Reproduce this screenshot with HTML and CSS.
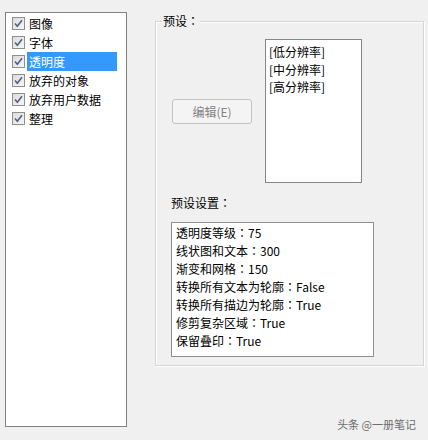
FILE: index.html
```html
<!DOCTYPE html>
<html lang="zh-CN">
<head>
<meta charset="utf-8">
<title>透明度</title>
<link rel="stylesheet" href="styles.css">
</head>
<body>
<div class="page">
  <div class="cats">
    <div class="cat"><span class="cb"><svg viewBox="0 0 13 13" width="13" height="13"><path d="M3 6.5 L5.3 9.2 L10 3.2" fill="none" stroke="#4d6185" stroke-width="1.6"/></svg></span><span class="lbl">图像</span></div>
    <div class="cat"><span class="cb"><svg viewBox="0 0 13 13" width="13" height="13"><path d="M3 6.5 L5.3 9.2 L10 3.2" fill="none" stroke="#4d6185" stroke-width="1.6"/></svg></span><span class="lbl">字体</span></div>
    <div class="cat"><span class="cb"><svg viewBox="0 0 13 13" width="13" height="13"><path d="M3 6.5 L5.3 9.2 L10 3.2" fill="none" stroke="#4d6185" stroke-width="1.6"/></svg></span><span class="lbl sel">透明度</span></div>
    <div class="cat"><span class="cb"><svg viewBox="0 0 13 13" width="13" height="13"><path d="M3 6.5 L5.3 9.2 L10 3.2" fill="none" stroke="#4d6185" stroke-width="1.6"/></svg></span><span class="lbl">放弃的对象</span></div>
    <div class="cat"><span class="cb"><svg viewBox="0 0 13 13" width="13" height="13"><path d="M3 6.5 L5.3 9.2 L10 3.2" fill="none" stroke="#4d6185" stroke-width="1.6"/></svg></span><span class="lbl">放弃用户数据</span></div>
    <div class="cat"><span class="cb"><svg viewBox="0 0 13 13" width="13" height="13"><path d="M3 6.5 L5.3 9.2 L10 3.2" fill="none" stroke="#4d6185" stroke-width="1.6"/></svg></span><span class="lbl">整理</span></div>
  </div>
  <div class="right">
    <div class="group">
      <span class="legend">预设<span class="colon" lang="ja">：</span></span>
      <div class="toprow">
        <div class="btn">编辑(E)</div>
        <div class="presets">
          <div>[低分辨率]</div>
          <div>[中分辨率]</div>
          <div>[高分辨率]</div>
        </div>
      </div>
      <div class="setlabel">预设设置<span class="colon" lang="ja">：</span></div>
      <div class="settings">
        <div>透明度等级<span class="colon" lang="ja">：</span>75</div>
        <div>线状图和文本<span class="colon" lang="ja">：</span>300</div>
        <div>渐变和网格<span class="colon" lang="ja">：</span>150</div>
        <div>转换所有文本为轮廓<span class="colon" lang="ja">：</span>False</div>
        <div>转换所有描边为轮廓<span class="colon" lang="ja">：</span>True</div>
        <div>修剪复杂区域<span class="colon" lang="ja">：</span>True</div>
        <div>保留叠印<span class="colon" lang="ja">：</span>True</div>
      </div>
    </div>
    <div class="mark">头条 @一册笔记</div>
  </div>
</div>
</body>
</html>
```

FILE: styles.css
```css
html, body {
  margin: 0;
  padding: 0;
  background: #f0f0f0;
}
body {
  font-family: "Noto Sans CJK SC", "Liberation Sans", sans-serif;
  font-size: 12px;
  color: #000;
  width: 428px;
  height: 440px;
  overflow: hidden;
}
.page {
  display: flex;
  height: 440px;
}
.colon {
  font-family: "Noto Sans CJK JP", "Noto Sans CJK SC", sans-serif;
}
.cats {
  box-sizing: border-box;
  margin: 12px 0 0 5px;
  width: 122px;
  height: 415px;
  background: #fff;
  border: 1px solid #828282;
  padding: 0.5px 0 0 6px;
}
.cat {
  display: flex;
  align-items: center;
  height: 19px;
}
.cb {
  box-sizing: border-box;
  width: 13px;
  height: 13px;
  border: 1px solid #8e8f8f;
  background: linear-gradient(135deg, #dcdcdc, #f6f6f6);
  display: flex;
  align-items: center;
  justify-content: center;
  margin-right: 2px;
}
.cb svg {
  display: block;
  flex: none;
}
.lbl {
  line-height: 19px;
  padding: 0 2px;
}
.lbl.sel {
  background: #3399ff;
  color: #fff;
  width: 86px;
}
.right {
  display: flex;
  flex-direction: column;
  margin-left: 28px;
  padding-top: 21px;
  width: 269px;
}
.group {
  position: relative;
  box-sizing: border-box;
  height: 345px;
  border: 1px solid #d5d5d5;
  box-shadow: inset 1px 1px 0 #fff, 1px 1px 0 #fff;
  padding: 17px 0 8px 15px;
}
.legend {
  position: absolute;
  left: 6px;
  top: -9px;
  line-height: 16px;
  padding: 0 1px;
  background: #f0f0f0;
}
.toprow {
  display: flex;
  align-items: center;
}
.btn {
  box-sizing: border-box;
  margin-left: 1px;
  width: 80px;
  height: 25px;
  border: 1px solid #c2c2c2;
  border-radius: 3px;
  background: #f4f4f4;
  color: #838383;
  display: flex;
  align-items: center;
  justify-content: center;
}
.presets {
  box-sizing: border-box;
  margin-left: 13px;
  width: 97px;
  height: 144px;
  background: #fff;
  border: 1px solid #828790;
  padding: 3px 0 0 3px;
  line-height: 17.5px;
}
.setlabel {
  margin-top: 12px;
  line-height: 16px;
}
.settings {
  box-sizing: border-box;
  margin-top: 11px;
  width: 203px;
  height: 135px;
  background: #fff;
  border: 1px solid #8e8f8f;
  padding: 1px 0 0 4px;
  line-height: 18px;
}
.mark {
  margin-top: auto;
  align-self: flex-end;
  margin-right: 8px;
  margin-bottom: 8px;
  color: #6e6e6e;
  font-size: 11px;
  line-height: 16px;
}
```
